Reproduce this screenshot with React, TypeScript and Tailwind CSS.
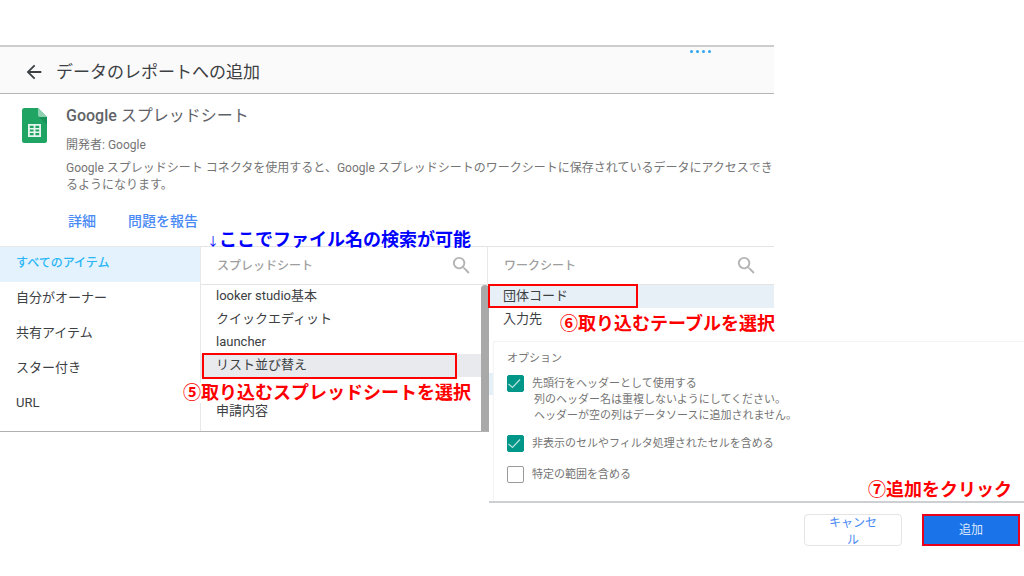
import type { ReactNode } from "react";
import clsx from "clsx";
import { MdArrowBack, MdSearch } from "react-icons/md";

const filters = ["すべてのアイテム", "自分がオーナー", "共有アイテム", "スター付き", "URL"];

const SheetsIcon = () => (
  <svg viewBox="0 0 25 35" className="w-[25px] h-[35px] shrink-0" aria-hidden="true">
    <path d="M2 0h14l9 9v23.500a2.500 2.500 0 0 1-2.500 2.500h-20A2.500 2.500 0 0 1 0 32.500V2.500A2.500 2.500 0 0 1 2 0z" fill="#1fa463" />
    <path d="M16 0l9 9h-7a2 2 0 0 1-2-2z" fill="#8ed1b1" />
    <path d="M17 9h8v8z" fill="#17935a" />
    <path
      fillRule="evenodd"
      fill="#e8f5ee"
      d="M6 16h13v13H6zM7.800 17.800v2.100h3.800v-2.100zM13.400 17.800v2.100h3.800v-2.100zM7.800 21.500v2h3.800v-2zM13.400 21.500v2h3.800v-2zM7.800 25.100v2.100h3.800v-2.100zM13.400 25.100v2.100h3.800v-2.100z"
    />
  </svg>
);

const Note = ({ className, children }: { className: string; children: ReactNode }) => (
  <p className={clsx("absolute z-10 whitespace-nowrap text-lg leading-5 font-bold", className)}>
    {children}
  </p>
);

const ColumnHeader = ({ title }: { title: string }) => (
  <div className="flex items-center justify-between h-[39px] px-4 border-y border-[#e4e4e4]">
    <h3 className="text-xs font-medium text-[#9e9e9e]">{title}</h3>
    <button type="button" aria-label={`${title}を検索`} className="text-[#b4b4b4]">
      <MdSearch size={23} />
    </button>
  </div>
);

const Row = ({ children, className }: { children?: ReactNode; className?: string }) => (
  <li className={clsx("relative h-[23px] pl-[15px] text-[13px] leading-[22px] text-[#3c4043]", className)}>
    {children}
  </li>
);

const Option = ({ id, label, checked }: { id: string; label: string; checked?: boolean }) => (
  <div className="flex items-center gap-2">
    <span className="grid shrink-0">
      <input
        id={id}
        type="checkbox"
        defaultChecked={checked}
        className="peer col-start-1 row-start-1 appearance-none w-[17px] h-[17px] rounded-[2px] border border-[#9a9a9a] checked:bg-[#009688] checked:border-[#009688]"
      />
      <svg
        viewBox="0 0 17 17"
        className="col-start-1 row-start-1 w-[17px] h-[17px] pointer-events-none invisible peer-checked:visible"
      >
        <path d="M1.500 9l4 3.500 7.500-8" fill="none" stroke="#b9e2dd" strokeWidth="1.2" />
      </svg>
    </span>
    <label htmlFor={id} className="text-[11px] leading-4">
      {label}
    </label>
  </div>
);

export default function App() {
  return (
    <main
      lang="ja"
      className="pt-[45px] bg-white font-[Roboto,'Noto_Sans_CJK_JP',sans-serif] overflow-x-hidden"
    >
      <header className="relative flex items-center gap-[11px] h-[49px] mr-[250px] pt-[3px] pl-[23px] bg-[#fafafa] border-t-2 border-t-[#cdcdcd] border-b border-b-[#b5b5b5] text-[#3c4043]">
        <button type="button" aria-label="戻る">
          <MdArrowBack size={22} />
        </button>
        <h1 className="text-[17px] leading-6">データのレポートへの追加</h1>
        <span className="absolute right-[63px] top-[3px] flex gap-[3px]">
          <i className="size-[3px] rounded-full bg-[#2fa4ee]" />
          <i className="size-[3px] rounded-full bg-[#2fa4ee]" />
          <i className="size-[3px] rounded-full bg-[#2fa4ee]" />
          <i className="size-[3px] rounded-full bg-[#2fa4ee]" />
        </span>
      </header>

      <section className="flex items-start gap-[19px] h-[152px] pl-[22px] pt-[14px]">
        <SheetsIcon />
        <div className="-mt-1 whitespace-nowrap text-[#757575]">
          <h2 className="text-base leading-6 text-[#5f6368]">
            <span className="font-medium">Google</span> スプレッドシート
          </h2>
          <p className="mt-2 text-xs leading-[18px]">開発者: Google</p>
          <p className="mt-[6px] text-xs leading-[17px]">
            Google スプレッドシート コネクタを使用すると、Google スプレッドシートのワークシートに保存されているデータにアクセスでき
            <br />
            るようになります。
          </p>
          <nav className="flex gap-8 mt-[17px] pl-[2px] text-sm font-medium text-[#4a8af4]">
            <a href="#details">詳細</a>
            <a href="#report">問題を報告</a>
          </nav>
        </div>
      </section>

      <div className="relative flex items-start">
        <Note className="left-[207px] -top-4 text-[#0000ff]">
          <span className="text-xs font-normal">↓</span>
          ここでファイル名の検索が可能
        </Note>

        <div className="flex w-[489px] shrink-0 h-[186px] border-b border-[#b0b0b0]">
          <ul className="w-[201px] border-t border-r border-[#e8e8e8]">
            {filters.map((name, i) => (
              <li key={name}>
                <button
                  type="button"
                  className={clsx(
                    "w-full h-[35px] pl-4 pb-1 text-left",
                    i === 0 ? "bg-[#e3f2fd] text-xs font-medium text-[#29b6f6]" : "text-[13px] text-[#3c4043]"
                  )}
                >
                  {name}
                </button>
              </li>
            ))}
          </ul>
          <div className="relative flex-1">
            <ColumnHeader title="スプレッドシート" />
            <div className="flex">
              <ul className="flex-1">
                <Row>looker studio基本</Row>
                <Row>クイックエディット</Row>
                <Row>launcher</Row>
                <Row className="bg-[#e8eaed]">
                  リスト並び替え
                  <span className="absolute left-px right-6 -top-px -bottom-[2px] border-2 border-[#ff0000]" />
                </Row>
                <Row />
                <Row>申請内容</Row>
              </ul>
              <div className="w-2 h-[146px] rounded-t bg-[#a9a9a9]" />
            </div>
            <Note className="-left-[18px] top-[137px] bg-white text-[#ff0000]">
              ⑤取り込むスプレッドシートを選択
            </Note>
          </div>
        </div>

        <div className="flex-1 min-w-0 -ml-[2px]">
          <div className="relative mr-[250px]">
            <div className="border-l border-[#e8e8e8]">
              <ColumnHeader title="ワークシート" />
            </div>
            <ul className="ml-px">
              <Row className="bg-[#e8f0f7]">
                団体コード
                <span className="absolute left-0 w-[150px] -top-px bottom-0 border-2 border-[#ff0000]" />
              </Row>
              <Row>入力先</Row>
            </ul>
            <Note className="left-[73px] -bottom-[3px] text-[#ff0000]">⑥取り込むテーブルを選択</Note>
          </div>

          <div className="relative flex ml-[2px] mt-[10px] border-b-2 border-[#cdd0d3]">
            <div className="w-1 h-[22px] mt-[32px] bg-[#e6f1f7]" />
            <fieldset className="flex-1 h-[160px] pl-[13px] pt-[9px] border-l border-t border-[#f3f3f3] text-[#757575]">
              <p className="text-[11px] leading-4">オプション</p>
              <div className="mt-2">
                <Option id="header-row" label="先頭行をヘッダーとして使用する" checked />
                <p className="pl-[27px] text-[11px] leading-4 whitespace-nowrap">
                  列のヘッダー名は重複しないようにしてください。
                  <br />
                  ヘッダーが空の列はデータソースに追加されません。
                </p>
              </div>
              <div className="mt-[11px]">
                <Option id="hidden-cells" label="非表示のセルやフィルタ処理されたセルを含める" checked />
              </div>
              <div className="mt-[14px]">
                <Option id="range" label="特定の範囲を含める" />
              </div>
            </fieldset>
            <Note className="right-3 bottom-px text-[#ff0000]">⑦追加をクリック</Note>
          </div>

          <footer className="flex justify-end gap-5 pt-[11px] pr-1 text-xs">
            <button
              type="button"
              className="w-[98px] h-8 px-6 rounded border border-[#e4e4e4] leading-[17px] text-[#4a8af4]"
            >
              キャンセル
            </button>
            <button type="button" className="w-[98px] h-8 border-2 border-[#e8001c] bg-[#1a73e8] text-[#dce9fb]">
              追加
            </button>
          </footer>
        </div>
      </div>
    </main>
  );
}
